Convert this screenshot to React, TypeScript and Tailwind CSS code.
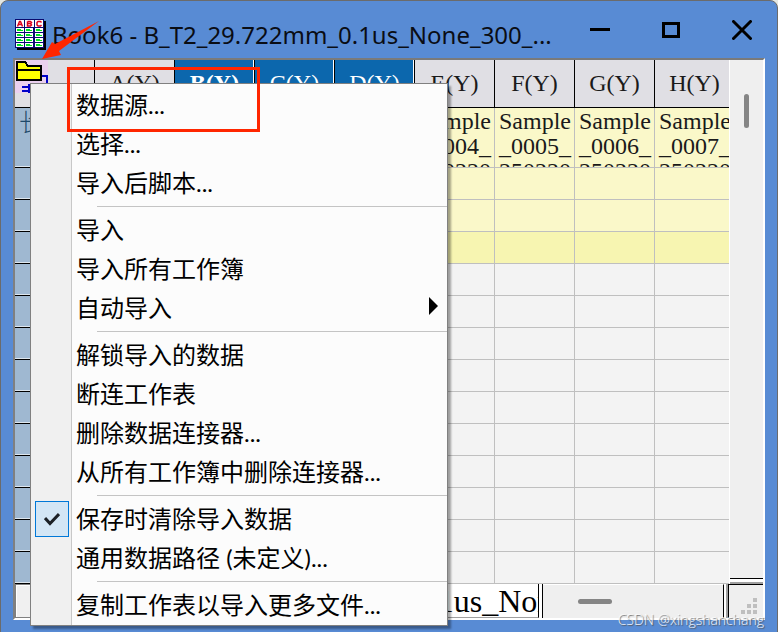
import { clsx } from "clsx";
import { Fragment } from "react";

interface MenuEntry {
  label: string;
  submenu?: boolean;
  checked?: boolean;
}

const MENU_GROUPS: MenuEntry[][] = [
  [{ label: "数据源..." }, { label: "选择..." }, { label: "导入后脚本..." }],
  [
    { label: "导入" },
    { label: "导入所有工作簿" },
    { label: "自动导入", submenu: true },
  ],
  [
    { label: "解锁导入的数据" },
    { label: "断连工作表" },
    { label: "删除数据连接器..." },
    { label: "从所有工作簿中删除连接器..." },
  ],
  [
    { label: "保存时清除导入数据", checked: true },
    { label: "通用数据路径 (未定义)..." },
  ],
  [{ label: "复制工作表以导入更多文件..." }],
];

const COLUMNS = [
  { name: "A(Y)", sample: "_0000_" },
  { name: "B(Y)", sample: "_0001_", selected: true, active: true },
  { name: "C(Y)", sample: "_0002_", selected: true },
  { name: "D(Y)", sample: "_0003_", selected: true },
  { name: "E(Y)", sample: "_0004_" },
  { name: "F(Y)", sample: "_0005_" },
  { name: "G(Y)", sample: "_0006_" },
  { name: "H(Y)", sample: "_0007_" },
];

const ROWS = [
  "bg-[#faf8c9]",
  "bg-[#faf8c9]",
  "bg-[#f7f5b1]",
  ...Array(10).fill("bg-[#f3f3f3]"),
];

function BookIcon() {
  return (
    <svg
      className="mt-[18px]"
      width="31"
      height="31"
      viewBox="0 0 31 31"
      shapeRendering="crispEdges"
    >
      <path d="M2 2h29v29H2z" fill="#000" />
      <path d="M0 0h29v29H0z" fill="#0a0a6e" />
      <path d="M1 1h8v7H1zM10 1h9v7h-9zM20 1h8v7h-8z" fill="#fff" />
      {[9, 14, 19, 24].map((y) =>
        [1, 10, 20].map((x) => (
          <g key={`${x}-${y}`}>
            <path d={`M${x} ${y}h8v4h-8z`} fill="#fff" />
            <path d={`M${x + 1} ${y + 1}h4v1h2v1h-6z`} fill="#00e61e" />
          </g>
        )),
      )}
      <g fill="none" stroke="#e0001b" strokeWidth="1.5" shapeRendering="auto">
        <path d="M2.500 7.500l2-5h1l2 5M3.500 5.500h3" />
        <path d="M12.500 2.500v4.500h3l1-1-1-1.500h-3M12.500 2.500h3l1 1-1 1" />
        <path d="M26.500 3.500l-1-1h-2.500l-1 1v2.500l1 1h2.500l1-1" />
      </g>
    </svg>
  );
}

function ConnectorIcon() {
  return (
    <svg width="33" height="33" viewBox="0 0 33 33" shapeRendering="crispEdges">
      <path d="M0 0h33v33H0z" fill="#ead0ef" />
      <path
        d="M27 16h5v12M14 24v9M7 27h7M7 31h7"
        fill="none"
        stroke="#0000c8"
        strokeWidth="2"
      />
      <path d="M2 20V2h8l3 4h13v14z" fill="#ff0" stroke="#000" strokeWidth="2" />
      <path d="M2 10h24" stroke="#000" strokeWidth="2" />
    </svg>
  );
}

function TitleBar() {
  return (
    <header className="flex h-[57px] items-start pl-3.5">
      <BookIcon />
      <h1 className="min-w-0 flex-1 overflow-hidden pt-[18px] pl-1.5 font-['Noto_Sans','Noto_Sans_CJK_SC',sans-serif] text-[24px] leading-8 whitespace-nowrap text-[#0a0d14]">
        Book6 - B_T2_29.722mm_0.1us_None_300_...
      </h1>
      <div className="flex self-stretch">
        <button type="button" aria-label="最小化" className="grid w-[71px] place-items-center">
          <svg width="20" height="20" viewBox="0 0 20 20" stroke="#000" strokeWidth="3">
            <path d="M0 9.500h20" />
          </svg>
        </button>
        <button type="button" aria-label="最大化" className="grid w-[71px] place-items-center">
          <svg width="18" height="16" viewBox="0 0 18 16" fill="none" stroke="#000" strokeWidth="3">
            <path d="M1.500 1.500h15v13h-15z" />
          </svg>
        </button>
        <button type="button" aria-label="关闭" className="grid w-[71px] place-items-center">
          <svg width="20" height="20" viewBox="0 0 20 20" stroke="#000" strokeWidth="3" strokeLinecap="round">
            <path d="M1.500 1.500l17 17M18.500 1.500l-17 17" />
          </svg>
        </button>
      </div>
    </header>
  );
}

function Sheet() {
  return (
    <div className="min-w-0 flex-1 overflow-hidden bg-[#f3f3f3]">
      <table className="w-[720px] table-fixed border-separate border-spacing-0 text-[24px] leading-[25px]">
        <thead>
          <tr className="h-12">
            <th className="w-20 border-r border-b border-black bg-[#e0dfe4] p-0 align-top" aria-label="数据连接器">
              <ConnectorIcon />
            </th>
            {COLUMNS.map((col) => (
              <th
                key={col.name}
                scope="col"
                className={clsx(
                  "w-20 border-r border-b border-black p-0",
                  col.active ? "font-bold" : "font-normal",
                  col.selected
                    ? "bg-[#0c67ad] text-white shadow-[inset_-1px_0_#fff]"
                    : "bg-[#e0dfe4] text-[#1a1a1a]",
                )}
              >
                {col.name}
              </th>
            ))}
          </tr>
        </thead>
        <tbody>
          <tr className="h-[60px]">
            <th
              scope="row"
              className="border-r border-b border-black bg-[#9fb8d1] p-0 pl-1 text-left align-top font-['Noto_Sans_CJK_SC',sans-serif] font-light text-[#1f4a6b] shadow-[inset_0_-1px_#dde6ee]"
            >
              长名称
            </th>
            {COLUMNS.map((col) => (
              <td key={col.name} className="border-r border-b border-[#bfbfbf] bg-[#faf8c9] p-0 align-top">
                <div className="h-[59px] overflow-hidden pt-px pl-1 whitespace-nowrap text-[#1a1a1a]">
                  Sample
                  <br />
                  {col.sample}
                  <br />
                  250220
                </div>
              </td>
            ))}
          </tr>
          {ROWS.map((tone, i) => (
            <tr key={i} className="h-8">
              <th className="border-r border-b border-black bg-[#9fb8d1] p-0 shadow-[inset_0_-1px_#dde6ee]" />
              {COLUMNS.map((col) => (
                <td key={col.name} className={clsx("border-r border-b border-[#bfbfbf] p-0", tone)} />
              ))}
            </tr>
          ))}
        </tbody>
      </table>
    </div>
  );
}

function BottomBar() {
  return (
    <div className="flex h-[34px] bg-[#efefef]">
      <div className="flex">
        {["M7 0v8L3 4z", "M6 0v8L2 4z", "M2 0v8l4-4z", "M1 0v8l4-4z"].map((d) => (
          <button
            key={d}
            type="button"
            aria-label="切换工作表"
            className="grid w-[34px] place-items-center border border-[#808080] bg-[#f0f0f0] shadow-[inset_1px_1px_#fff]"
          >
            <svg width="8" height="8" viewBox="0 0 8 8" fill="#555">
              <path d={d} />
            </svg>
          </button>
        ))}
      </div>
      <a
        href="#sheet"
        className="min-w-0 flex-1 overflow-hidden border-r border-b border-r-black border-b-[#a0a0a0] bg-white pl-5 text-[32px] leading-[34px] whitespace-nowrap text-black"
      >
        B_T2_29.722mm_0.1us_None_300
      </a>
      <div className="w-1 border-r border-black bg-white" />
      <div className="flex w-[181px] items-center border-t border-r border-t-white border-r-black pl-[35px]">
        <div className="h-[5px] w-[34px] rounded-full bg-[#858585]" />
      </div>
      <div className="w-1 border-l-2 border-white bg-[#a0a0a0]" />
      <div className="flex w-[35px] items-end justify-end border-t border-l border-black pr-1.5 pb-1">
        <svg width="16" height="16" viewBox="0 0 16 16" fill="#bfbfbf">
          <path d="M12 0h4v4h-4zM6 6h4v4H6zM12 6h4v4h-4zM0 12h4v4H0zM6 12h4v4H6zM12 12h4v4h-4z" />
        </svg>
      </div>
    </div>
  );
}

function ItemRow({ item }: { item: MenuEntry }) {
  if (item.checked) {
    return (
      <label className="flex h-[39px] items-center">
        <span className="relative ml-1 h-9 w-[34px]">
          <input
            type="checkbox"
            defaultChecked
            className="block h-9 w-[34px] appearance-none border border-[#0078d7] bg-[#d3e6f5]"
          />
          <svg
            className="pointer-events-none absolute inset-0 m-auto"
            width="16"
            height="14"
            viewBox="0 0 16 14"
            fill="none"
            stroke="#1c2126"
            strokeWidth="3"
          >
            <path d="M1 6l5 5.500 9-9.500" />
          </svg>
        </span>
        <span className="ml-[7px]">{item.label}</span>
      </label>
    );
  }
  return (
    <button type="button" role="menuitem" className="flex h-[39px] w-full items-center pr-2 pl-[45px]">
      <span className="flex-1 text-left">{item.label}</span>
      {item.submenu && (
        <svg width="10" height="18" viewBox="0 0 10 18" className="mb-1">
          <path d="M0 0l9 9-9 9z" />
        </svg>
      )}
    </button>
  );
}

function ContextMenu() {
  return (
    <div
      role="menu"
      className="absolute top-[83px] left-[30px] w-[418px] border border-[#808080] bg-[#fcfcfc] py-px font-[Lato,'Noto_Sans_CJK_SC',sans-serif] text-[24px] leading-8 whitespace-nowrap text-black shadow-[3px_3px_2px_rgba(0,0,0,0.35)]"
    >
      <div className="absolute inset-y-0 left-0 w-[41px] border-r border-[#c8c8c8] bg-[#f0f0f0]" />
      <div className="relative">
        {MENU_GROUPS.map((group, i) => (
          <Fragment key={i}>
            {i > 0 && (
              <div className="flex h-2 items-center pl-[66px]">
                <hr className="flex-1 border-[#c4c4c4]" />
              </div>
            )}
            {group.map((item) => (
              <ItemRow key={item.label} item={item} />
            ))}
          </Fragment>
        ))}
      </div>
    </div>
  );
}

export default function App() {
  return (
    <div className="relative overflow-hidden bg-[#e4e8e4] font-['Liberation_Serif','Noto_Sans_CJK_SC',serif]">
      <div className="rounded-t-lg border border-[#6b6b6b] bg-[#588bd4] pb-[13px]">
        <TitleBar />
        <main className="mx-3 border-2 border-t-[#7a7a7a] border-r-white border-b-white border-l-[#808080]">
          <div className="flex">
            <Sheet />
            <div className="flex w-[34px] flex-col border-l border-white">
              <div className="flex-1 border-b border-black bg-[#efefef] pt-[34px]">
                <div className="mx-auto h-[34px] w-[5px] rounded-full bg-[#858585]" />
              </div>
              <div className="h-[5px] border-b-2 border-[#a0a0a0] bg-white" />
            </div>
          </div>
          <BottomBar />
        </main>
      </div>

      <ContextMenu />

      {/* callouts */}
      <div className="pointer-events-none absolute top-[67px] left-[67px] h-[65px] w-[193px] border-3 border-[#ff2600]" />
      <svg className="pointer-events-none absolute top-5 left-[41px]" width="60" height="40" viewBox="0 0 60 40">
        <path d="M1 39 11 22l3 2L58 1 18 31l2 4z" fill="#ff2600" />
      </svg>
      <p className="pointer-events-none absolute right-3.5 bottom-1 font-['Open_Sans',sans-serif] text-[14px] leading-5 font-light text-white/90 [text-shadow:1px_1px_1px_#555]">
        CSDN @xingshanchang
      </p>
    </div>
  );
}
